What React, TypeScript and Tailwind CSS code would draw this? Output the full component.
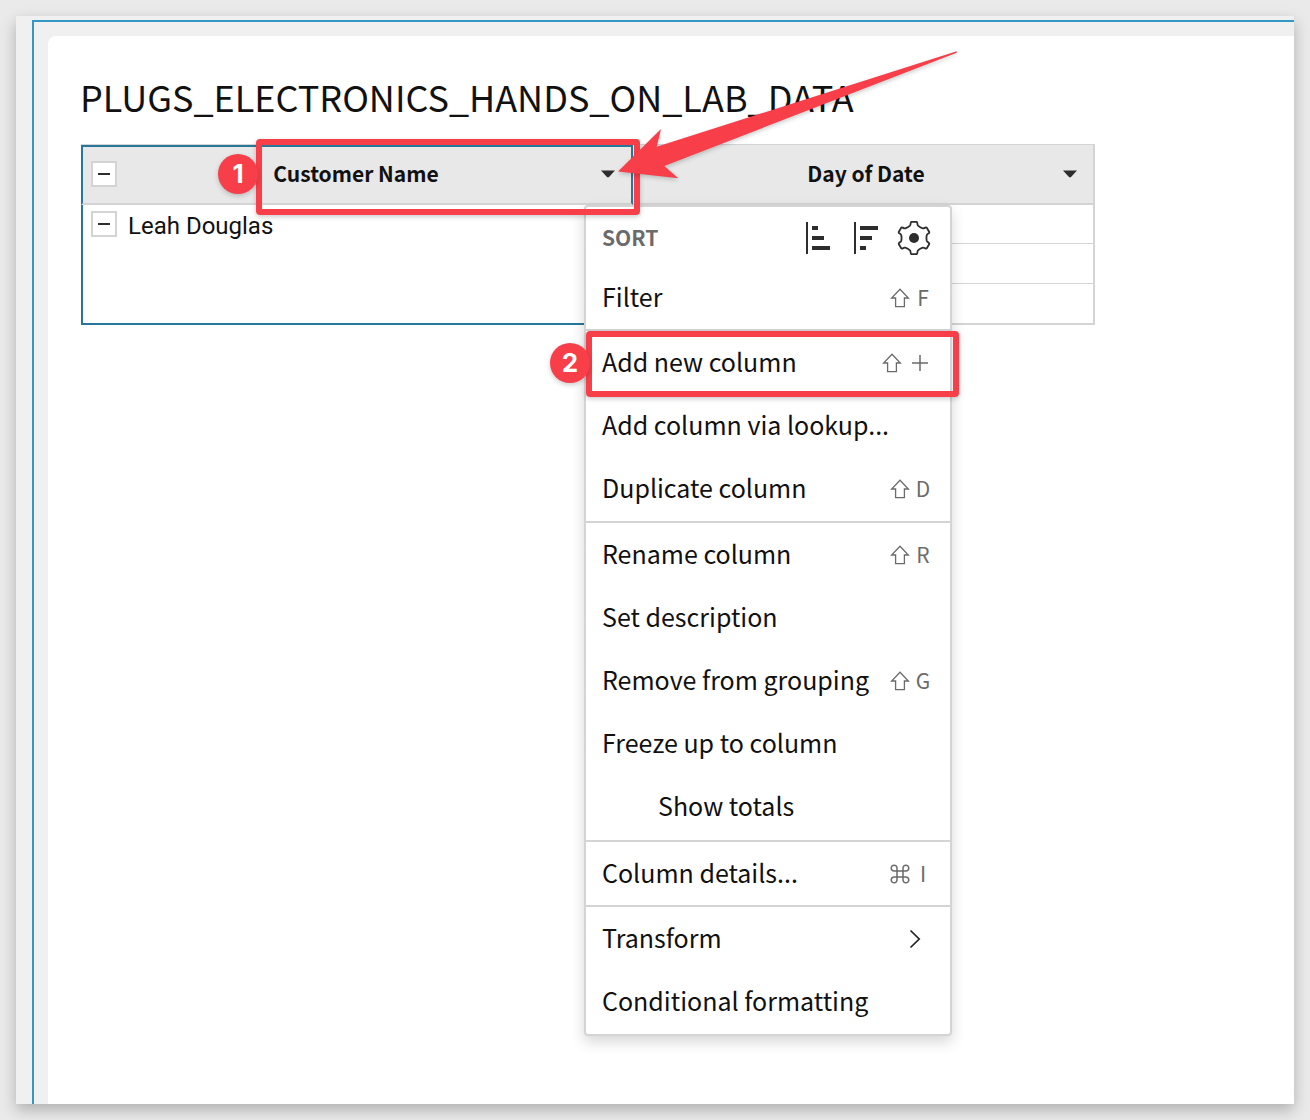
import type { ReactNode } from "react";

const gearPath = (() => {
  const at = (x: number, y: number, k: number) => {
    const a = (k * Math.PI) / 3;
    const px = 17 + x * Math.cos(a) - y * Math.sin(a);
    const py = 17 + x * Math.sin(a) + y * Math.cos(a);
    return `${px.toFixed(2)} ${py.toFixed(2)}`;
  };
  let d = `M${at(-4, -12.4, 0)}`;
  for (let k = 0; k < 6; k++) {
    d += `Q${at(-3.4, -13, k)} ${at(-3.3, -15, k)}Q${at(-3.2, -16.2, k)} ${at(-2.2, -16.2, k)}`;
    d += `L${at(2.2, -16.2, k)}Q${at(3.2, -16.2, k)} ${at(3.3, -15, k)}Q${at(3.4, -13, k)} ${at(4, -12.4, k)}`;
    d += `Q${at(6.1, -10.5, k)} ${at(-4, -12.4, k + 1)}`;
  }
  return d + "Z";
})();

function SortAscIcon() {
  return (
    <svg width="24" height="32" viewBox="0 0 24 32" fill="#2d2d2d" aria-hidden="true">
      <path d="M0 0h2v32H0zM6 4h6v4H6zM6 14h12v4H6zM6 24h18v4H6z" />
    </svg>
  );
}

function SortDescIcon() {
  return (
    <svg width="24" height="32" viewBox="0 0 24 32" fill="#2d2d2d" aria-hidden="true">
      <path d="M0 0h2v32H0zM6 4h18v4H6zM6 14h12v4H6zM6 24h6v4H6z" />
    </svg>
  );
}

function GearIcon() {
  return (
    <svg width="34" height="34" viewBox="0 0 34 34" aria-hidden="true">
      <path d={gearPath} fill="none" stroke="#2d2d2d" strokeWidth="1.8" strokeLinejoin="round" />
      <circle cx="17" cy="17" r="5" fill="#2d2d2d" />
    </svg>
  );
}

function ShiftIcon() {
  return (
    <svg width="20" height="20" viewBox="0 0 20 20" fill="none" stroke="#6b6b6b" strokeWidth="1.3" aria-hidden="true">
      <path d="M10 1.2 18.4 10H14.4v8.6H5.6V10H1.6Z" />
    </svg>
  );
}

function CommandIcon() {
  return (
    <svg width="20" height="20" viewBox="0 0 20 20" fill="none" stroke="#6b6b6b" strokeWidth="1.5" aria-hidden="true">
      <path d="M7 7V4.2A2.9 2.9 0 1 0 4.1 7H15.9A2.9 2.9 0 1 0 13 4.2V15.8A2.9 2.9 0 1 0 15.9 13H4.1A2.9 2.9 0 1 0 7 15.8Z" />
    </svg>
  );
}

function PlusIcon() {
  return (
    <svg width="16" height="16" viewBox="0 0 16 16" stroke="#6b6b6b" strokeWidth="1.5" aria-hidden="true">
      <path d="M8 0v16M0 8h16" />
    </svg>
  );
}

function Caret() {
  return (
    <svg width="14" height="8" viewBox="0 0 14 8" fill="#2d2d2d" aria-hidden="true">
      <path d="M0 .6h14L7.8 7.2H6.2Z" />
    </svg>
  );
}

function CollapseButton({ label }: { label: string }) {
  return (
    <button
      type="button"
      aria-label={label}
      className="flex size-[26px] shrink-0 items-center justify-center border-2 border-[#d4d4d4] bg-white"
    >
      <span className="h-[2px] w-3 bg-[#2d2d2d]" />
    </button>
  );
}

function Badge({ children }: { children: ReactNode }) {
  return (
    <span className="flex size-10 items-center justify-center rounded-full bg-[#f73e49] font-['Inter',sans-serif] text-[26px] leading-none font-bold text-white shadow-[0_2px_5px_rgba(0,0,0,0.2)]">
      {children}
    </span>
  );
}

function Item({ label, keys, indent = false }: { label: string; keys?: ReactNode; indent?: boolean }) {
  return (
    <button
      type="button"
      role="menuitem"
      className={`flex h-[63px] w-full items-center justify-between whitespace-nowrap pr-5 text-left ${indent ? "pl-[72px]" : "pl-4"}`}
    >
      <span className="pb-1">{label}</span>
      {keys && <span className="flex items-center gap-1.5 text-[21px] text-[#6b6b6b]">{keys}</span>}
    </button>
  );
}

function Letter({ children }: { children: string }) {
  return <span className="flex w-[14px] justify-center pb-0.5">{children}</span>;
}

function Shift({ letter }: { letter: string }) {
  return (
    <>
      <ShiftIcon />
      <Letter>{letter}</Letter>
    </>
  );
}

function ColumnMenu() {
  return (
    <div
      role="menu"
      aria-label="Column menu"
      className="w-[368px] rounded-sm border-2 border-[#d4d4d4] bg-white text-[25px] leading-8 text-[#111] shadow-[0_6px_14px_rgba(0,0,0,0.16)]"
    >
      <div>
        <div className="flex h-[62px] items-center justify-between pr-5 pl-4">
          <span className="pb-[3px] text-[21px] font-bold text-[#6b6b6b]">SORT</span>
          <span className="flex items-center gap-6">
            <button type="button" aria-label="Sort ascending">
              <SortAscIcon />
            </button>
            <button type="button" aria-label="Sort descending">
              <SortDescIcon />
            </button>
            <button type="button" aria-label="Sort settings" className="-mr-px -ml-[5px]">
              <GearIcon />
            </button>
          </span>
        </div>
        <div className="-mt-[3px]">
          <Item label="Filter" keys={<Shift letter="F" />} />
        </div>
      </div>
      <div className="border-t-2 border-[#d4d4d4] pb-px">
        <div className="relative">
          <Item
            label="Add new column"
            keys={
              <>
                <ShiftIcon />
                <span className="mr-0.5 ml-1">
                  <PlusIcon />
                </span>
              </>
            }
          />
          <div className="pointer-events-none absolute top-0 left-0 h-[66px] w-[373px] rounded-sm border-6 border-[#f73e49] shadow-[0_2px_5px_rgba(0,0,0,0.2)]" />
          <div className="absolute top-3 -left-9">
            <Badge>2</Badge>
          </div>
        </div>
        <Item label="Add column via lookup..." />
        <Item label="Duplicate column" keys={<Shift letter="D" />} />
      </div>
      <div className="border-t-2 border-[#d4d4d4] pb-0.5">
        <Item label="Rename column" keys={<Shift letter="R" />} />
        <Item label="Set description" />
        <Item label="Remove from grouping" keys={<Shift letter="G" />} />
        <Item label="Freeze up to column" />
        <Item label="Show totals" indent />
      </div>
      <div className="border-t-2 border-[#d4d4d4]">
        <Item
          label="Column details..."
          keys={
            <>
              <CommandIcon />
              <Letter>I</Letter>
            </>
          }
        />
      </div>
      <div className="border-t-2 border-[#d4d4d4] pb-px">
        <Item
          label="Transform"
          keys={
            <svg className="mr-[9px]" width="12" height="20" viewBox="0 0 12 20" fill="none" stroke="#222" strokeWidth="1.7" aria-hidden="true">
              <path d="m1.5 1.5 8.7 8.5-8.7 8.5" />
            </svg>
          }
        />
        <Item label="Conditional formatting" />
      </div>
    </div>
  );
}

export default function App() {
  return (
    <div className="flex min-h-screen flex-col bg-[#eaeaea] p-4 font-['Noto_Sans_CJK_SC','Noto_Sans',sans-serif]">
      <main className="flex grow flex-col bg-[#f0f0f0] pt-1 pl-4 shadow-[0_6px_14px_rgba(0,0,0,0.25)]">
        <div className="flex grow flex-col border-t-2 border-l-2 border-[#3498c4] pt-[14px] pl-[14px]">
          <section className="grow rounded-tl-lg bg-white pt-[34px] pb-[70px] pl-8">
            <h1 className="text-[36px] leading-[52px] whitespace-nowrap text-[#111]">
              PLUGS_ELECTRONICS_HANDS_ON_LAB_DATA
            </h1>
            <div className="relative mt-[22px] ml-px min-h-[890px] w-[1014px]">
              <table className="w-full table-fixed border-separate border-spacing-0 border-t border-[#d4d4d4] text-[#111]">
                <colgroup>
                  <col className="w-[552px]" />
                  <col />
                </colgroup>
                <thead>
                  <tr>
                    <th
                      scope="col"
                      className="h-[60px] border-t-2 border-r-2 border-b-2 border-l-2 border-[#28779b] border-b-[#d4d4d4] bg-[#e8e8e8] p-0"
                    >
                      <div className="flex items-center pr-4 pb-0.5 pl-2">
                        <CollapseButton label="Collapse all" />
                        <span className="grow pr-1.5 pb-0.5 text-center text-[21px] leading-8 font-bold">Customer Name</span>
                        <button type="button" aria-label="Customer Name menu">
                          <Caret />
                        </button>
                      </div>
                    </th>
                    <th
                      scope="col"
                      className="h-[60px] border-r-2 border-b-2 border-[#d4d4d4] bg-[#e8e8e8] p-0"
                    >
                      <div className="flex items-center pr-4 pl-9">
                        <span className="grow pb-0.5 text-center text-[21px] leading-8 font-bold">Day of Date</span>
                        <button type="button" aria-label="Day of Date menu">
                          <Caret />
                        </button>
                      </div>
                    </th>
                  </tr>
                </thead>
                <tbody>
                  <tr>
                    <td rowSpan={3} className="border-r-2 border-b-2 border-l-2 border-[#28779b] p-0 align-top">
                      <div className="flex items-start gap-[11px] pt-1.5 pl-2">
                        <CollapseButton label="Collapse Leah Douglas" />
                        <span className="font-['Roboto',sans-serif] text-2xl leading-[30px]">Leah Douglas</span>
                      </div>
                    </td>
                    <td className="h-[39px] border-r-2 border-b border-[#d4d4d4] p-0" />
                  </tr>
                  <tr>
                    <td className="h-10 border-r-2 border-b border-[#d4d4d4] p-0" />
                  </tr>
                  <tr>
                    <td className="h-[41px] border-r-2 border-b-2 border-[#d4d4d4] p-0" />
                  </tr>
                </tbody>
              </table>

              <div className="absolute top-[61px] left-[503px]">
                <ColumnMenu />
              </div>

              <div className="pointer-events-none absolute top-[-5px] left-[175px] h-[76px] w-[384px] rounded-sm border-6 border-[#f73e49] shadow-[0_2px_5px_rgba(0,0,0,0.2)]" />
              <div className="absolute top-[10px] left-[137px]">
                <Badge>1</Badge>
              </div>
              <svg
                className="pointer-events-none absolute top-[-94px] left-[536px] overflow-visible drop-shadow-[0_2px_2px_rgba(0,0,0,0.2)]"
                width="342"
                height="130"
                viewBox="0 0 342 130"
                fill="#f73e49"
                aria-hidden="true"
              >
                <path d="M1 121.5 44 79 39.700 96.700 339.700 1.200 339.700 2.700 47.300 116 61.300 128.300Z" />
              </svg>
            </div>
          </section>
        </div>
      </main>
    </div>
  );
}
